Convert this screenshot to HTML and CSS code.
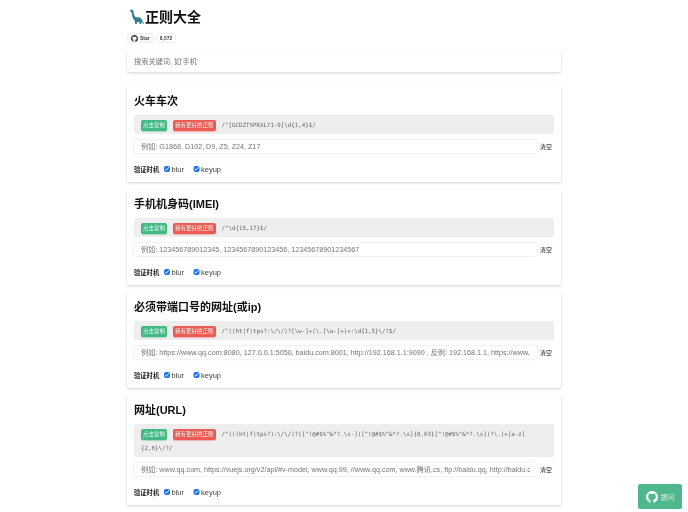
FILE: index.html
```html
<!DOCTYPE html>
<html lang="zh">
<head>
<meta charset="utf-8">
<title>正则大全</title>
<link rel="stylesheet" href="styles.css">
</head>
<body>
<main class="page">
  <h1 class="title"><svg class="dino" viewBox="0 0 16 16" width="16" height="16"><path fill="#2f7f8f" d="M1 1.2 3 .6l1.3.9.4 2.4c.4 2.3 1.2 4.1 3 4.6 2-.7 4 0 5 1.700.8 1.400 1.500 3.400 2.600 4.900-1.400-.5-2.400-1.400-3-2.400l-.1 2.200h-1.600l-.4-1.800H7.900l-.1 1.800H6.200l-.4-3.200C4 10.500 3 7 2.600 3.300L1.200 2.600z"/></svg>正则大全</h1>
  <div class="star">
    <span class="star-btn"><svg class="gh" viewBox="0 0 16 16" width="7" height="7"><path fill="#24292f" d="M8 0C3.580 0 0 3.580 0 8c0 3.540 2.290 6.530 5.470 7.590.4.070.55-.17.55-.38 0-.19-.01-.82-.01-1.490-2.010.37-2.530-.49-2.690-.94-.09-.23-.48-.94-.82-1.130-.28-.15-.68-.52-.01-.53.63-.01 1.080.58 1.230.82.720 1.210 1.870.87 2.330.66.070-.52.280-.87.510-1.070-1.780-.2-3.640-.89-3.640-3.950 0-.87.310-1.590.820-2.150-.08-.2-.36-1.020.08-2.120 0 0 .67-.21 2.200.82a7.420 7.420 0 0 1 4 0c1.530-1.040 2.200-.82 2.200-.82.440 1.100.160 1.920.080 2.120.51.560.82 1.270.82 2.150 0 3.070-1.870 3.750-3.650 3.950.29.250.540.730.540 1.480 0 1.070-.01 1.930-.01 2.200 0 .21.150.46.550.38A8.010 8.010 0 0 0 16 8c0-4.420-3.580-8-8-8z"/></svg>Star</span>
    <span class="star-count">8,572</span>
  </div>
  <div class="search"><input class="search-input" type="text" placeholder="搜索关键词, 如'手机'"></div>

  <section class="card">
    <h2 class="card-title">火车车次</h2>
    <div class="regex"><span class="tag tag-green">点击复制</span><span class="tag tag-red">我有更好的正则</span><code class="code">/^[GCDZTSPKXLY1-9]\d{1,4}$/</code></div>
    <div class="field"><input class="field-input" type="text" placeholder="例如: G1868, D102, D9, Z5, Z24, Z17"><span class="clear">清空</span></div>
    <div class="timing"><strong class="timing-label">验证时机</strong><label class="check"><input type="checkbox" checked>blur</label><label class="check"><input type="checkbox" checked>keyup</label></div>
  </section>

  <section class="card">
    <h2 class="card-title">手机机身码(IMEI)</h2>
    <div class="regex"><span class="tag tag-green">点击复制</span><span class="tag tag-red">我有更好的正则</span><code class="code">/^\d{15,17}$/</code></div>
    <div class="field"><input class="field-input" type="text" placeholder="例如: 123456789012345, 1234567890123456, 12345678901234567"><span class="clear">清空</span></div>
    <div class="timing"><strong class="timing-label">验证时机</strong><label class="check"><input type="checkbox" checked>blur</label><label class="check"><input type="checkbox" checked>keyup</label></div>
  </section>

  <section class="card">
    <h2 class="card-title">必须带端口号的网址(或ip)</h2>
    <div class="regex"><span class="tag tag-green">点击复制</span><span class="tag tag-red">我有更好的正则</span><code class="code">/^((ht|f)tps?:\/\/)?[\w-]+(\.[\w-]+)+:\d{1,5}\/?$/</code></div>
    <div class="field"><input class="field-input" type="text" placeholder="例如: https://www.qq.com:8080, 127.0.0.1:5050, baidu.com:8001, http://192.168.1.1:9090 , 反例: 192.168.1.1, https://www.jd.com"><span class="clear">清空</span></div>
    <div class="timing"><strong class="timing-label">验证时机</strong><label class="check"><input type="checkbox" checked>blur</label><label class="check"><input type="checkbox" checked>keyup</label></div>
  </section>

  <section class="card">
    <h2 class="card-title">网址(URL)</h2>
    <div class="regex"><span class="tag tag-green">点击复制</span><span class="tag tag-red">我有更好的正则</span><code class="code">/^(((ht|f)tps?):\/\/)?([^!@#$%^&amp;*?.\s-]([^!@#$%^&amp;*?.\s]{0,63}[^!@#$%^&amp;*?.\s])?\.)+[a-z]{2,6}\/?/</code></div>
    <div class="field"><input class="field-input" type="text" placeholder="例如: www.qq.com, https://vuejs.org/v2/api/#v-model, www.qq.99, //www.qq.com, www.腾讯.cs, ftp://baidu.qq, http://baidu.com"><span class="clear">清空</span></div>
    <div class="timing"><strong class="timing-label">验证时机</strong><label class="check"><input type="checkbox" checked>blur</label><label class="check"><input type="checkbox" checked>keyup</label></div>
  </section>
</main>
<a class="ask"><svg viewBox="0 0 16 16" width="12" height="12"><path fill="#fff" d="M8 0C3.580 0 0 3.580 0 8c0 3.540 2.290 6.530 5.470 7.590.4.070.55-.17.55-.38 0-.19-.01-.82-.01-1.490-2.010.37-2.530-.49-2.690-.94-.09-.23-.48-.94-.82-1.130-.28-.15-.68-.52-.01-.53.63-.01 1.080.58 1.230.82.720 1.210 1.870.87 2.330.66.070-.52.280-.87.510-1.070-1.780-.2-3.640-.89-3.640-3.950 0-.87.310-1.590.820-2.150-.08-.2-.36-1.020.08-2.120 0 0 .67-.21 2.200.82a7.420 7.420 0 0 1 4 0c1.530-1.040 2.200-.82 2.200-.82.440 1.100.160 1.920.080 2.120.51.560.82 1.270.82 2.150 0 3.070-1.870 3.750-3.650 3.950.29.250.540.730.540 1.480 0 1.070-.01 1.930-.01 2.200 0 .21.150.46.550.38A8.010 8.010 0 0 0 16 8c0-4.420-3.580-8-8-8z"/></svg>提问</a>
</body>
</html>
```
FILE: styles.css
```css
* { box-sizing: border-box; }
html, body { margin: 0; background: #fff; }
body {
  font-family: "Liberation Sans", "Noto Sans CJK SC", sans-serif;
  color: #2c3e50;
  height: 512px;
  overflow: hidden;
}
.page { width: 434px; margin-left: 127px; padding-top: 7px; will-change: transform; }
.title {
  display: flex;
  align-items: center;
  margin: 0;
  height: 20px;
  font-size: 14px;
  font-weight: 700;
  color: #111;
  line-height: 20px;
}
.dino { margin: 0 0 0 2px; flex: none; }
.star { display: flex; gap: 2px; margin-top: 6px; height: 10px; font-size: 5px; font-weight: 700; color: #444; }
.star-btn, .star-count {
  display: flex; align-items: center; gap: 2px;
  background: #f6f8fa; border: 1px solid #eceef0; border-radius: 3px; padding: 0 3px;
}
.star-count { background: #fff; }
.search {
  margin-top: 7px;
  height: 22px;
  border-radius: 2px;
  box-shadow: 0 1px 3px rgba(0,0,0,.18);
  padding: 0 7px;
  display: flex;
}
.search-input { border: 0; outline: 0; flex: 1; padding: 0; font: 7.200px "Liberation Sans", "Noto Sans CJK SC", sans-serif; background: transparent; }
.search-input::placeholder { color: #757575; }
.card {
  margin-top: 7px;
  padding: 7px;
  border-radius: 2px;
  box-shadow: 0 1px 3px rgba(0,0,0,.18);
}
.search + .card { margin-top: 14px; }
.card-title { margin: 0; height: 16px; line-height: 16px; font-size: 11px; font-weight: 700; color: #111; }
.regex {
  margin-top: 6px;
  padding: 3px 7px 2px;
  min-height: 19px;
  background: #eee;
  border-radius: 2px;
  font-size: 0;
  line-height: 14px;
}
.tag {
  display: inline-block;
  height: 11px;
  line-height: 11px;
  padding: 0 2px;
  margin-right: 6px;
  border-radius: 2px;
  font-size: 5.500px;
  color: #e6f5ee;
  vertical-align: middle;
}
.tag-green { background: #42b983; box-shadow: 0 1px 1px rgba(66,185,131,.4); }
.tag-red { background: #ed5a54; box-shadow: 0 1px 1px rgba(237,90,84,.4); }
.code { font: 5.800px/14px "DejaVu Sans Mono", monospace; color: #666; overflow-wrap: anywhere; vertical-align: middle; }
.field { display: flex; align-items: center; margin-top: 6px; height: 13px; }
.field-input {
  flex: 1;
  min-width: 0;
  height: 13px;
  border: 0;
  outline: 0;
  padding: 0 7px;
  border-radius: 2px;
  box-shadow: 0 0 2px rgba(0,0,0,.18);
  font: 7.200px "Liberation Sans", "Noto Sans CJK SC", sans-serif;
}
.field-input::placeholder { color: #757575; }
.clear { flex: none; width: 17px; text-align: right; padding-right: 2px; font-size: 6px; color: #111; }
.timing { display: flex; align-items: center; margin-top: 10px; height: 12px; font-size: 7.500px; color: #444; }
.timing-label { font-size: 6.300px; color: #222; width: 29.500px; }
.check { display: flex; align-items: center; width: 29.500px; }
.check input { width: 6.500px; height: 6.500px; margin: 0 1.500px 0 0; accent-color: #1a73e8; }
.ask {
  position: fixed;
  right: 6px;
  bottom: 3px;
  width: 44px;
  height: 25px;
  display: flex;
  align-items: center;
  justify-content: center;
  gap: 3px;
  background: #4fb78c;
  border-radius: 2px;
  font-size: 7px;
  color: #d8f0e5;
}
```
